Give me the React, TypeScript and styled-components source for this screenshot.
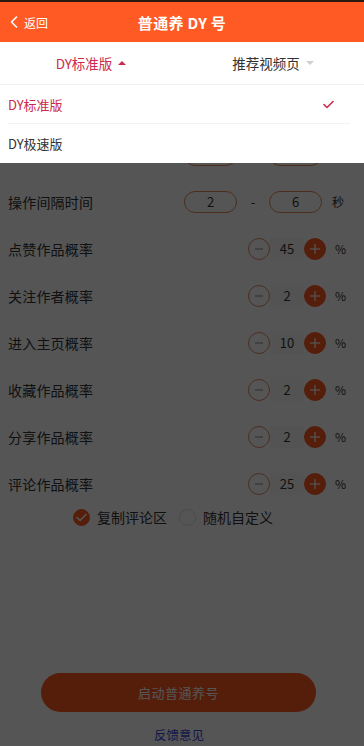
import React from "react";
import styled, { createGlobalStyle } from "styled-components";

const GlobalStyle = createGlobalStyle`
  html, body {
    margin: 0;
    padding: 0;
    background: #ffffff;
  }
  body {
    font-family: "Noto Sans CJK SC", "Noto Sans", Roboto, sans-serif;
    color: #333;
  }
  * {
    box-sizing: border-box;
  }
`;

const ORANGE = "#ff5a23";
const CRIMSON = "#cc2a4c";

const Page = styled.div`
  position: relative;
  width: 364px;
  height: 746px;
  overflow: hidden;
  background: #ffffff;
  display: flex;
  flex-direction: column;
`;

const Header = styled.div`
  height: 42px;
  background: ${ORANGE};
  border-top: 2px solid #2a1a12;
  display: flex;
  align-items: center;
  justify-content: center;
  position: relative;
  color: #fff;
`;

const BackLink = styled.a`
  position: absolute;
  left: 10px;
  top: 0;
  bottom: 0;
  display: flex;
  align-items: center;
  gap: 6px;
  font-size: 12px;
  color: #fff;
  cursor: pointer;
`;

const Title = styled.div`
  font-size: 15px;
  font-weight: 700;
  letter-spacing: 0.3px;
`;

const Tabs = styled.div`
  height: 42px;
  display: flex;
  background: #fff;
`;

const Tab = styled.div<{ $active?: boolean }>`
  flex: 1;
  display: flex;
  align-items: center;
  justify-content: center;
  gap: 6px;
  font-size: 13.5px;
  color: ${(p) => (p.$active ? CRIMSON : "#333")};
`;

const Triangle = styled.span<{ $up?: boolean; $color: string }>`
  width: 0;
  height: 0;
  border-left: 4px solid transparent;
  border-right: 4px solid transparent;
  ${(p) =>
    p.$up
      ? `border-bottom: 4px solid ${p.$color};`
      : `border-top: 4px solid ${p.$color};`}
`;

const Rows = styled.div`
  display: flex;
  flex-direction: column;
`;

const Row = styled.div`
  height: 47px;
  display: flex;
  align-items: center;
  justify-content: space-between;
  padding: 0 18px 0 8px;
`;

const Label = styled.div`
  font-size: 14px;
  color: #333;
  letter-spacing: 0.2px;
`;

const Controls = styled.div`
  display: flex;
  align-items: center;
`;

const RangeBox = styled.div`
  width: 53px;
  height: 22px;
  border: 1px solid #e5875c;
  border-radius: 11px;
  display: flex;
  align-items: center;
  justify-content: center;
  font-size: 13px;
  color: #333;
`;

const Dash = styled.span`
  width: 32px;
  text-align: center;
  font-size: 13px;
  color: #333;
`;

const Unit = styled.span<{ $w: number; $pr?: number }>`
  width: ${(p) => p.$w}px;
  padding-right: ${(p) => p.$pr ?? 0}px;
  text-align: right;
  font-size: 12px;
  color: #333;
`;

const RoundBtn = styled.span<{ $filled?: boolean }>`
  width: 22px;
  height: 22px;
  border-radius: 50%;
  display: flex;
  align-items: center;
  justify-content: center;
  border: 1px solid ${(p) => (p.$filled ? ORANGE : "#e08a66")};
  background: ${(p) => (p.$filled ? ORANGE : "transparent")};
`;

const Count = styled.span`
  width: 34px;
  height: 22px;
  display: flex;
  align-items: center;
  justify-content: center;
  font-size: 13px;
  color: #333;
  background: #f8f8f8;
`;

const Checks = styled.div`
  display: flex;
  align-items: center;
  justify-content: center;
  gap: 12px;
  padding: 0 18px 0 0;
  height: 20px;
`;

const CheckItem = styled.label`
  display: flex;
  align-items: center;
  gap: 7px;
  font-size: 14px;
  color: #333;
`;

const Circle = styled.span<{ $on?: boolean }>`
  width: 17px;
  height: 17px;
  border-radius: 50%;
  display: flex;
  align-items: center;
  justify-content: center;
  background: ${(p) => (p.$on ? ORANGE : "#fff")};
  border: 1px solid ${(p) => (p.$on ? ORANGE : "#ddd")};
`;

const Spacer = styled.div`
  flex: 1;
`;

const StartButton = styled.button`
  margin: 0 48px 0 41px;
  height: 39px;
  border: none;
  border-radius: 20px;
  background: ${ORANGE};
  color: #fff;
  font-family: inherit;
  font-size: 13px;
  letter-spacing: 0.5px;
`;

const Feedback = styled.a`
  display: block;
  text-align: center;
  margin: 13px 0 1px;
  padding-right: 6px;
  font-size: 12.5px;
  color: #3848d8;
  height: 20px;
`;

const Overlay = styled.div`
  position: absolute;
  left: 0;
  right: 0;
  top: 84px;
  bottom: 0;
  background: rgba(0, 0, 0, 0.665);
`;

const Dropdown = styled.div`
  position: absolute;
  left: 0;
  right: 0;
  top: 84px;
  background: #fff;
  border-top: 1px solid #f0f0f0;
  padding: 0 0 0 8px;
`;

const Option = styled.div<{ $active?: boolean; $last?: boolean }>`
  height: 39px;
  display: flex;
  align-items: center;
  justify-content: space-between;
  padding-right: 16px;
  font-size: 13px;
  color: ${(p) => (p.$active ? CRIMSON : "#333")};
  border-bottom: ${(p) => (p.$last ? "none" : "1px solid #f3f3f3")};
  margin-right: 14px;
`;

const Minus = () => (
  <svg width="10" height="10" viewBox="0 0 10 10">
    <line x1="1" y1="5" x2="9" y2="5" stroke="#999" strokeWidth="1.2" />
  </svg>
);

const Plus = () => (
  <svg width="12" height="12" viewBox="0 0 12 12">
    <line x1="1" y1="6" x2="11" y2="6" stroke="#fff" strokeWidth="1.2" />
    <line x1="6" y1="1" x2="6" y2="11" stroke="#fff" strokeWidth="1.2" />
  </svg>
);

const Tick = ({ color }: { color: string }) => (
  <svg width="11" height="9" viewBox="0 0 11 9">
    <polyline
      points="1,4.5 4,7.5 10,1.5"
      fill="none"
      stroke={color}
      strokeWidth="1.6"
      strokeLinecap="round"
      strokeLinejoin="round"
    />
  </svg>
);

// rows that sit under the open dropdown: only their boxes peek out
const HiddenRangeRow = () => (
  <Row>
    <span />
    <Controls>
      <RangeBox />
      <Dash />
      <RangeBox />
      <Unit $w={24} $pr={2} />
    </Controls>
  </Row>
);

const RangeRow = ({ label, from, to }: { label: string; from: number; to: number }) => (
  <Row>
    <Label>{label}</Label>
    <Controls>
      <RangeBox>{from}</RangeBox>
      <Dash>-</Dash>
      <RangeBox>{to}</RangeBox>
      <Unit $w={24} $pr={2}>
        秒
      </Unit>
    </Controls>
  </Row>
);

const StepRow = ({ label, value }: { label: string; value: number }) => (
  <Row>
    <Label>{label}</Label>
    <Controls>
      <RoundBtn>
        <Minus />
      </RoundBtn>
      <Count>{value}</Count>
      <RoundBtn $filled>
        <Plus />
      </RoundBtn>
      <Unit $w={20}>%</Unit>
    </Controls>
  </Row>
);

const steps = [
  { label: "点赞作品概率", value: 45 },
  { label: "关注作者概率", value: 2 },
  { label: "进入主页概率", value: 10 },
  { label: "收藏作品概率", value: 2 },
  { label: "分享作品概率", value: 2 },
  { label: "评论作品概率", value: 25 },
];

const App = () => {
  return (
    <Page>
      <GlobalStyle />
      <Header>
        <BackLink>
          <svg width="8" height="12" viewBox="0 0 8 12">
            <polyline
              points="6.5,1 1.5,6 6.5,11"
              fill="none"
              stroke="#fff"
              strokeWidth="1.6"
              strokeLinecap="round"
              strokeLinejoin="round"
            />
          </svg>
          返回
        </BackLink>
        <Title>普通养 DY 号</Title>
      </Header>
      <Tabs>
        <Tab $active>
          DY标准版
          <Triangle $up $color={CRIMSON} />
        </Tab>
        <Tab>
          推荐视频页
          <Triangle $color="#cfcfcf" />
        </Tab>
      </Tabs>
      <Rows>
        <Row />
        <HiddenRangeRow />
        <RangeRow label="操作间隔时间" from={2} to={6} />
        {steps.map((s) => (
          <StepRow key={s.label} label={s.label} value={s.value} />
        ))}
      </Rows>
      <Checks>
        <CheckItem>
          <Circle $on>
            <Tick color="#fff" />
          </Circle>
          复制评论区
        </CheckItem>
        <CheckItem>
          <Circle />
          随机自定义
        </CheckItem>
      </Checks>
      <Spacer />
      <StartButton>启动普通养号</StartButton>
      <Feedback>反馈意见</Feedback>
      <Overlay />
      <Dropdown>
        <Option $active>
          DY标准版
          <Tick color={CRIMSON} />
        </Option>
        <Option $last>DY极速版</Option>
      </Dropdown>
    </Page>
  );
};

export default App;
